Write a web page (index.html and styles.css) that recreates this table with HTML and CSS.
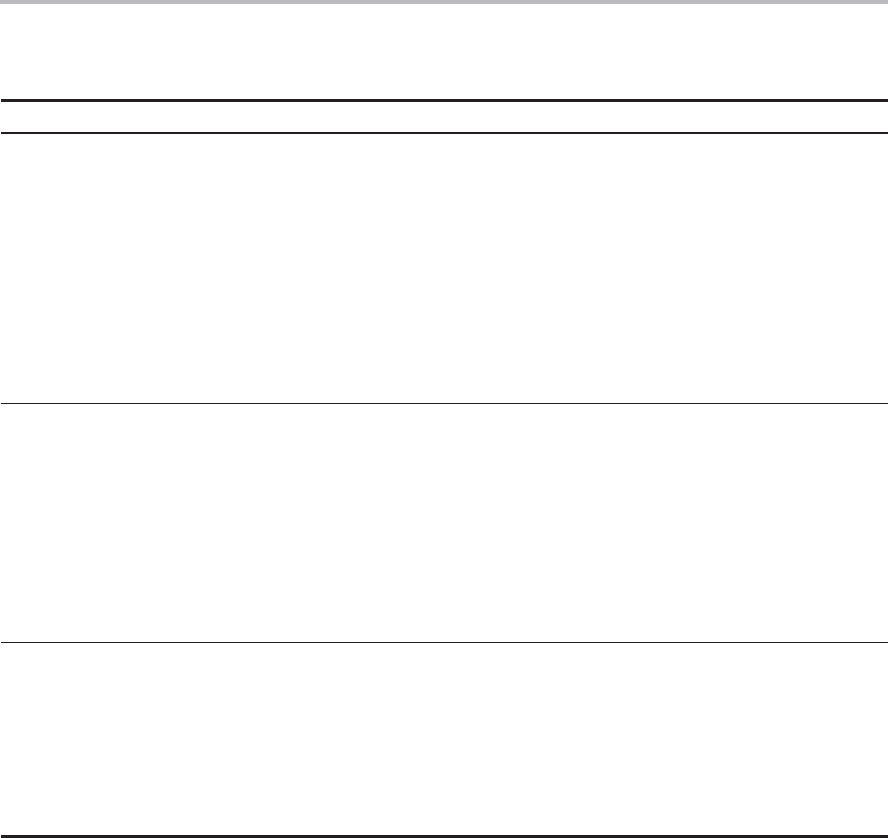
FILE: index.html
```html
<!DOCTYPE html>
<html lang="en">
<head>
<meta charset="utf-8">
<title>Table</title>
<link rel="stylesheet" href="styles.css">
</head>
<body>
<div class="topbar"></div>
<div class="page">
  <div class="table">
    <div class="thead"></div>
    <div class="row row-1"></div>
    <div class="row row-2"></div>
    <div class="row row-3"></div>
  </div>
</div>
</body>
</html>
```

FILE: styles.css
```css
html, body {
  margin: 0;
  padding: 0;
  background: #ffffff;
  font-family: "Liberation Sans", Arial, sans-serif;
}
.topbar {
  height: 4px;
  background: #bcbcbe;
}
.page {
  padding: 95px 0 0 1px;
}
.table {
  border-top: 3px solid #231f20;
  border-bottom: 3px solid #231f20;
}
.thead {
  height: 30px;
  border-bottom: 2px solid #231f20;
}
.row {
  border-bottom: 1px solid #231f20;
}
.row-1 { height: 269px; }
.row-2 { height: 238px; }
.row-3 { height: 192px; border-bottom: none; }
```
